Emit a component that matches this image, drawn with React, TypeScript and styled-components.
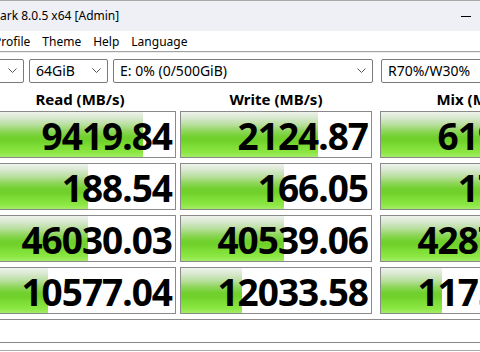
import { createGlobalStyle } from "styled-components";
import styled from "styled-components";

const GlobalStyle = createGlobalStyle`
  html, body {
    margin: 0;
    padding: 0;
    background: #ffffff;
    overflow: hidden;
  }
  body {
    font-family: "Noto Sans", "Open Sans", sans-serif;
    color: #000000;
  }
`;

const Window = styled.div`
  width: 597px;
  margin-left: -16px;
  display: flex;
  flex-direction: column;
`;

const TitleBar = styled.div`
  height: 31px;
  box-sizing: border-box;
  border-top: 1px solid #a9a9a9;
  background: #eef0f5;
  display: flex;
  align-items: center;
  padding-left: 16px;
`;

const TitleText = styled.span`
  flex: 1;
  font-size: 12px;
  padding-bottom: 1px;
`;

const CaptionButton = styled.div`
  width: 46px;
  height: 30px;
  display: flex;
  align-items: center;
  justify-content: center;
`;

const MenuBar = styled.div`
  height: 21px;
  box-sizing: border-box;
  border-bottom: 1px solid #a3a3a3;
  display: flex;
  align-items: center;
  gap: 12px;
  padding-left: 10px;
  font-size: 12px;
`;

const MenuItem = styled.span`
  line-height: 20px;
  padding-top: 2px;
`;

const ComboRow = styled.div`
  display: flex;
  border-top: 1px solid #eeeeee;
  padding-top: 6px;
  height: 24px;
`;

const Combo = styled.div<{ $w: number; $gap: number }>`
  width: ${(p) => p.$w}px;
  margin-left: ${(p) => p.$gap}px;
  flex: none;
  height: 24px;
  box-sizing: border-box;
  border: 1px solid #7a7a7a;
  border-radius: 2px;
  display: flex;
  align-items: center;
  justify-content: space-between;
  padding: 0 6px 1px 6px;
  font-size: 14px;
  white-space: nowrap;
  overflow: hidden;
`;

const Chevron = () => (
  <svg width="9" height="5" viewBox="0 0 9 5">
    <polyline points="0.5,0.5 4.5,4.5 8.5,0.5" fill="none" stroke="#555" strokeWidth="1" />
  </svg>
);

const HeaderRow = styled.div`
  display: grid;
  grid-template-columns: 192px 192px 196px;
  column-gap: 4px;
  height: 28px;
  box-sizing: border-box;
  padding-top: 4px;
`;

const Header = styled.div<{ $shift?: boolean }>`
  margin-left: ${(p) => (p.$shift ? "4px" : "0")};
  text-align: center;
  font-weight: 700;
  font-size: 15px;
  line-height: 24px;
  white-space: nowrap;
`;

const Grid = styled.div`
  display: grid;
  grid-template-columns: 192px 192px 196px;
  grid-auto-rows: 47px;
  column-gap: 4px;
  row-gap: 5px;
`;

const Cell = styled.div<{ $shift?: boolean }>`
  position: relative;
  margin-left: ${(p) => (p.$shift ? "4px" : "0")};
  box-sizing: border-box;
  border: 1px solid #8a8a8a;
  background: #ffffff;
  overflow: hidden;
`;

const Bar = styled.div`
  position: absolute;
  left: 0;
  top: 0;
  bottom: 0;
  background: linear-gradient(
    to bottom,
    #eef2ec 0%,
    #dbe9d2 12%,
    #b9df9f 28%,
    #8fd65c 42%,
    #72d02e 55%,
    #6fd12a 64%,
    #7edd36 76%,
    #8ce742 90%,
    #a3ec66 100%
  );
`;

const Value = styled.div`
  position: relative;
  text-align: right;
  padding-right: 3px;
  font-weight: 700;
  font-size: 37px;
  letter-spacing: -1px;
  line-height: 45px;
  padding-top: 1px;
  white-space: nowrap;
`;

const Comment = styled.div`
  margin-top: 5px;
  height: 24px;
  box-sizing: border-box;
  border-top: 1px solid #8a8a8a;
  border-bottom: 1px solid #8a8a8a;
`;

const BottomEdge = styled.div`
  margin-top: 7px;
  border-top: 1px solid #a8a8a8;
  height: 10px;
`;

const rows = [
  [
    { v: "9419.84", f: 0.83 },
    { v: "2124.87", f: 0.72 },
    { v: "6196.53", f: 1 },
  ],
  [
    { v: "188.54", f: 0.54 },
    { v: "166.05", f: 0.54 },
    { v: "172.41", f: 1 },
  ],
  [
    { v: "46030.03", f: 0.54 },
    { v: "40539.06", f: 0.54 },
    { v: "42873.10", f: 1 },
  ],
  [
    { v: "10577.04", f: 0.33 },
    { v: "12033.58", f: 0.32 },
    { v: "11752.36", f: 0.32 },
  ],
];

export default function App() {
  return (
    <>
      <GlobalStyle />
      <Window>
        <TitleBar>
          <TitleText>ark 8.0.5 x64 [Admin]</TitleText>
          <CaptionButton>
            <svg width="10" height="10" viewBox="0 0 10 10">
              <line x1="0" y1="5.5" x2="10" y2="5.5" stroke="#000" strokeWidth="1" />
            </svg>
          </CaptionButton>
          <CaptionButton>
            <svg width="10" height="10" viewBox="0 0 10 10">
              <rect x="0.5" y="0.5" width="9" height="9" fill="none" stroke="#000" />
            </svg>
          </CaptionButton>
          <CaptionButton>
            <svg width="10" height="10" viewBox="0 0 10 10">
              <path d="M0 0L10 10M10 0L0 10" stroke="#000" />
            </svg>
          </CaptionButton>
        </TitleBar>
        <MenuBar>
          <MenuItem>Profile</MenuItem>
          <MenuItem>Theme</MenuItem>
          <MenuItem>Help</MenuItem>
          <MenuItem>Language</MenuItem>
        </MenuBar>
        <ComboRow>
          <Combo $w={40} $gap={0}>
            <span>5</span>
            <Chevron />
          </Combo>
          <Combo $w={79} $gap={5}>
            <span>64GiB</span>
            <Chevron />
          </Combo>
          <Combo $w={260} $gap={5}>
            <span>E: 0% (0/500GiB)</span>
            <Chevron />
          </Combo>
          <Combo $w={192} $gap={8}>
            <span>R70%/W30%</span>
            <Chevron />
          </Combo>
        </ComboRow>
        <HeaderRow>
          <Header>Read (MB/s)</Header>
          <Header>Write (MB/s)</Header>
          <Header $shift>Mix (MB/s)</Header>
        </HeaderRow>
        <Grid>
          {rows.map((row, i) =>
            row.map((c, j) => (
              <Cell key={`${i}-${j}`} $shift={j === 2}>
                <Bar style={{ width: `${c.f * 100}%` }} />
                <Value>{c.v}</Value>
              </Cell>
            ))
          )}
        </Grid>
        <Comment />
        <BottomEdge />
      </Window>
    </>
  );
}
